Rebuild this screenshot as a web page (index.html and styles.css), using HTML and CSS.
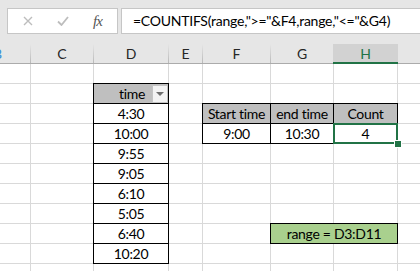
FILE: index.html
```html
<!DOCTYPE html>
<html lang="en">
<head>
    <meta charset="UTF-8">
    <title>COUNTIFS time range</title>
    <link rel="stylesheet" href="styles.css">
</head>
<body>
    <!-- Formula bar -->
    <div class="formula-bar">
        <div class="fx-box">
            <span class="fx-icon">
                <svg width="10" height="10" viewBox="0 0 10 10" fill="none" stroke="#bdbdbd" stroke-width="1.4">
                    <path d="M1 1L9 9M9 1L1 9"></path>
                </svg>
            </span>
            <span class="fx-icon">
                <svg width="12" height="10" viewBox="0 0 12 10" fill="none" stroke="#bdbdbd" stroke-width="1.8">
                    <path d="M1 5.5L4.5 9L11 1"></path>
                </svg>
            </span>
            <span class="fx-icon fx-text">fx</span>
        </div>
        <div class="formula-input">=COUNTIFS(range,"&gt;="&amp;F4,range,"&lt;="&amp;G4)</div>
    </div>

    <!-- Column headers -->
    <div class="col-headers">
        <div class="col-head col-cut"><span>B</span></div>
        <div class="col-head">C</div>
        <div class="col-head">D</div>
        <div class="col-head">E</div>
        <div class="col-head">F</div>
        <div class="col-head">G</div>
        <div class="col-head active">H</div>
        <div class="col-head"></div>
    </div>

    <!-- Sheet cells -->
    <div class="sheet">
        <!-- row 1 -->
        <div class="cell"></div><div class="cell"></div><div class="cell"></div><div class="cell"></div>
        <div class="cell"></div><div class="cell"></div><div class="cell"></div><div class="cell"></div>
        <!-- row 2 -->
        <div class="cell"></div><div class="cell"></div>
        <div class="cell boxed head-fill filter-cell">time<span class="filter-btn"></span></div>
        <div class="cell"></div><div class="cell"></div><div class="cell"></div><div class="cell"></div><div class="cell"></div>
        <!-- row 3 -->
        <div class="cell"></div><div class="cell"></div>
        <div class="cell boxed">4:30</div>
        <div class="cell"></div>
        <div class="cell boxed head-fill">Start time</div>
        <div class="cell boxed head-fill">end time</div>
        <div class="cell boxed head-fill">Count</div>
        <div class="cell"></div>
        <!-- row 4 -->
        <div class="cell"></div><div class="cell"></div>
        <div class="cell boxed">10:00</div>
        <div class="cell"></div>
        <div class="cell boxed">9:00</div>
        <div class="cell boxed">10:30</div>
        <div class="cell boxed selected">4<span class="fill-handle"></span></div>
        <div class="cell"></div>
        <!-- row 5 -->
        <div class="cell"></div><div class="cell"></div>
        <div class="cell boxed">9:55</div>
        <div class="cell"></div><div class="cell"></div><div class="cell"></div><div class="cell"></div><div class="cell"></div>
        <!-- row 6 -->
        <div class="cell"></div><div class="cell"></div>
        <div class="cell boxed">9:05</div>
        <div class="cell"></div><div class="cell"></div><div class="cell"></div><div class="cell"></div><div class="cell"></div>
        <!-- row 7 -->
        <div class="cell"></div><div class="cell"></div>
        <div class="cell boxed">6:10</div>
        <div class="cell"></div><div class="cell"></div><div class="cell"></div><div class="cell"></div><div class="cell"></div>
        <!-- row 8 -->
        <div class="cell"></div><div class="cell"></div>
        <div class="cell boxed">5:05</div>
        <div class="cell"></div><div class="cell"></div><div class="cell"></div><div class="cell"></div><div class="cell"></div>
        <!-- row 9 -->
        <div class="cell"></div><div class="cell"></div>
        <div class="cell boxed">6:40</div>
        <div class="cell"></div><div class="cell"></div>
        <div class="cell range-note">range = D3:D11</div>
        <div class="cell"></div>
        <!-- row 10 -->
        <div class="cell"></div><div class="cell"></div>
        <div class="cell boxed">10:20</div>
        <div class="cell"></div><div class="cell"></div><div class="cell"></div><div class="cell"></div><div class="cell"></div>
        <!-- row 11 -->
        <div class="cell"></div><div class="cell"></div><div class="cell"></div><div class="cell"></div>
        <div class="cell"></div><div class="cell"></div><div class="cell"></div><div class="cell"></div>
    </div>
</body>
</html>
```

FILE: styles.css
```css
/* Base */
* {
    box-sizing: border-box;
}

body {
    margin: 0;
    width: 420px;
    height: 271px;
    overflow: hidden;
    background-color: #fff;
    font-family: Lato, "Liberation Sans", sans-serif;
    font-size: 14px;
    color: #000;
}

/* Formula bar */
.formula-bar {
    height: 44px;
    background-color: #e6e6e6;
    display: flex;
    align-items: flex-start;
    gap: 3px;
    padding: 8px 0 0 7px;
}

.fx-box {
    width: 111px;
    height: 26px;
    background-color: #fff;
    border: 1px solid #c6c6c6;
    display: flex;
    align-items: center;
    padding-left: 2px;
}

.fx-icon {
    width: 35px;
    display: flex;
    justify-content: center;
    align-items: center;
}

.fx-text {
    font-family: "Liberation Serif", serif;
    font-style: italic;
    font-size: 15px;
    color: #555;
    letter-spacing: -1px;
}

.formula-input {
    flex: 1;
    height: 26px;
    background-color: #fff;
    border: 1px solid #c6c6c6;
    border-right: none;
    padding-left: 11px;
    line-height: 24px;
    letter-spacing: -0.25px;
    white-space: nowrap;
}

/* Column headers */
.col-headers,
.sheet {
    display: grid;
    grid-template-columns: 30px 62px 74px 33px 67px 62px 63px 1fr;
}

.col-headers {
    height: 20px;
    column-gap: 1px;
    background: linear-gradient(#e6e6e6, #b9b9b9);
    border-bottom: 1px solid #ababab;
}

.col-head {
    background-color: #e6e6e6;
    text-align: center;
    line-height: 19px;
    color: #262626;
    overflow: hidden;
}

.col-cut {
    display: flex;
    justify-content: flex-end;
    padding-right: 28px;
    color: #3a8fd8;
}

.col-head.active {
    margin: 0 -1px -1px;
    background-color: #d2d2d2;
    color: #217346;
    border-bottom: 2px solid #217346;
}

/* Cells */
.sheet {
    grid-auto-rows: 19px;
    gap: 1px;
    background-color: #d9d9d9;
}

.cell {
    position: relative;
    background-color: #fff;
    text-align: center;
    line-height: 19px;
    letter-spacing: -0.3px;
    white-space: nowrap;
}

.boxed {
    outline: 1px solid #000;
}

.head-fill {
    background-color: #bfbfbf;
}

.filter-cell {
    display: flex;
    justify-content: flex-end;
}

.filter-btn {
    align-self: flex-end;
    width: 16px;
    height: 18px;
    margin-left: 7px;
    background-color: #f3f3f3;
    border: 1px solid #c4c4c4;
    display: flex;
    justify-content: center;
    align-items: center;
}

.filter-btn::after {
    content: "";
    border-left: 4px solid transparent;
    border-right: 4px solid transparent;
    border-top: 4px solid #6e6e6e;
}

.selected {
    z-index: 1;
    outline: 1px solid #217346;
    box-shadow: inset 0 0 0 1px #217346;
}

.fill-handle {
    position: absolute;
    right: -5px;
    bottom: -5px;
    width: 8px;
    height: 8px;
    background-color: #217346;
    border: 1px solid #fff;
}

.range-note {
    grid-column: span 2;
    background-color: #a9d08e;
    outline: 1px solid #000;
}
```
